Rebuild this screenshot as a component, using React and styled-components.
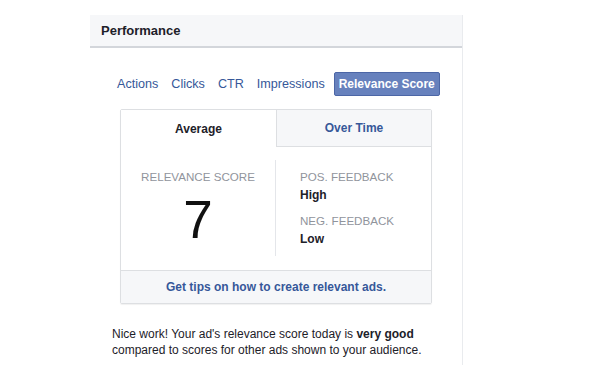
import styled, { createGlobalStyle } from 'styled-components';

const GlobalStyle = createGlobalStyle`
  body {
    margin: 0;
    background: #ffffff;
    font-family: 'Liberation Sans', Arial, Helvetica, sans-serif;
    color: #1d2129;
  }
`;

const Panel = styled.section`
  margin: 15px 0 0 90px;
  width: 373px;
  height: 350px;
  border-right: 1px solid #e9ebee;
  box-sizing: border-box;
`;

const Header = styled.header`
  height: 33px;
  display: flex;
  align-items: center;
  padding-left: 11px;
  background: #f6f7f9;
  border-bottom: 2px solid #d3d6db;
  box-sizing: border-box;
  font-size: 13px;
  font-weight: bold;
  color: #1d2129;
`;

const Metrics = styled.nav`
  display: flex;
  align-items: center;
  gap: 11px;
  margin: 24px 0 0 26px;
  height: 24px;
`;

const Metric = styled.span`
  font-size: ${(p) => (p.$active ? '12px' : '12.6px')};
  font-weight: ${(p) => (p.$active ? 'bold' : 'normal')};
  color: ${(p) => (p.$active ? '#ffffff' : '#365899')};
  background: ${(p) => (p.$active ? '#6781bd' : 'transparent')};
  border: 1px solid ${(p) => (p.$active ? '#4c66a6' : 'transparent')};
  border-radius: 2px;
  padding: ${(p) => (p.$active ? '4px 4px' : '4px 0')};
  margin-left: ${(p) => (p.$active ? '-3px' : '0')};
`;

const Card = styled.div`
  margin: 13px 0 0 30px;
  width: 312px;
  border: 1px solid #dddfe2;
  border-radius: 2px;
  box-shadow: 0 1px 1px rgba(0, 0, 0, 0.06);
  box-sizing: border-box;
`;

const Tabs = styled.div`
  display: grid;
  grid-template-columns: 1fr 1fr;
  height: 37px;
`;

const Tab = styled.div`
  display: flex;
  align-items: center;
  justify-content: center;
  font-size: 12px;
  font-weight: bold;
  color: ${(p) => (p.$active ? '#1d2129' : '#365899')};
  background: ${(p) => (p.$active ? '#ffffff' : '#f6f7f9')};
  border-left: ${(p) => (p.$active ? 'none' : '1px solid #dddfe2')};
  border-bottom: ${(p) => (p.$active ? 'none' : '1px solid #dddfe2')};
`;

const Body = styled.div`
  display: grid;
  grid-template-columns: 1fr 1fr;
  padding: 13px 0 14px;
`;

const Score = styled.div`
  display: flex;
  flex-direction: column;
  align-items: center;
  border-right: 1px solid #e4e6ea;
  height: 96px;
  padding-top: 10px;
  box-sizing: border-box;
`;

const Caption = styled.div`
  font-size: 11.6px;
  color: #90949c;
  line-height: 14px;
`;

const Big = styled.div`
  font-size: 53px;
  line-height: 52px;
  margin-top: 10px;
  color: #111111;
`;

const Feedback = styled.div`
  padding: 10px 0 0 24px;
  display: flex;
  flex-direction: column;
`;

const Value = styled.div`
  font-size: 12px;
  font-weight: bold;
  line-height: 14px;
  margin: 4px 0 ${(p) => p.$gap || 0}px;
  color: #1d2129;
`;

const Footer = styled.div`
  height: 32px;
  display: flex;
  align-items: center;
  justify-content: center;
  background: #f6f7f9;
  border-top: 1px solid #dddfe2;
  font-size: 12px;
  font-weight: bold;
  color: #365899;
`;

const Note = styled.p`
  margin: 22px 0 0 22px;
  font-size: 12px;
  line-height: 16px;
  color: #1d2129;
`;

const tabs = ['Actions', 'Clicks', 'CTR', 'Impressions', 'Relevance Score'];

export default function App() {
  return (
    <>
      <GlobalStyle />
      <Panel>
        <Header>Performance</Header>
        <Metrics>
          {tabs.map((t) => (
            <Metric key={t} $active={t === 'Relevance Score'}>
              {t}
            </Metric>
          ))}
        </Metrics>
        <Card>
          <Tabs>
            <Tab $active>Average</Tab>
            <Tab>Over Time</Tab>
          </Tabs>
          <Body>
            <Score>
              <Caption>RELEVANCE SCORE</Caption>
              <Big>7</Big>
            </Score>
            <Feedback>
              <Caption>POS. FEEDBACK</Caption>
              <Value $gap={12}>High</Value>
              <Caption>NEG. FEEDBACK</Caption>
              <Value>Low</Value>
            </Feedback>
          </Body>
          <Footer>Get tips on how to create relevant ads.</Footer>
        </Card>
        <Note>
          Nice work! Your ad's relevance score today is <b>very good</b>
          <br />
          compared to scores for other ads shown to your audience.
        </Note>
      </Panel>
    </>
  );
}
